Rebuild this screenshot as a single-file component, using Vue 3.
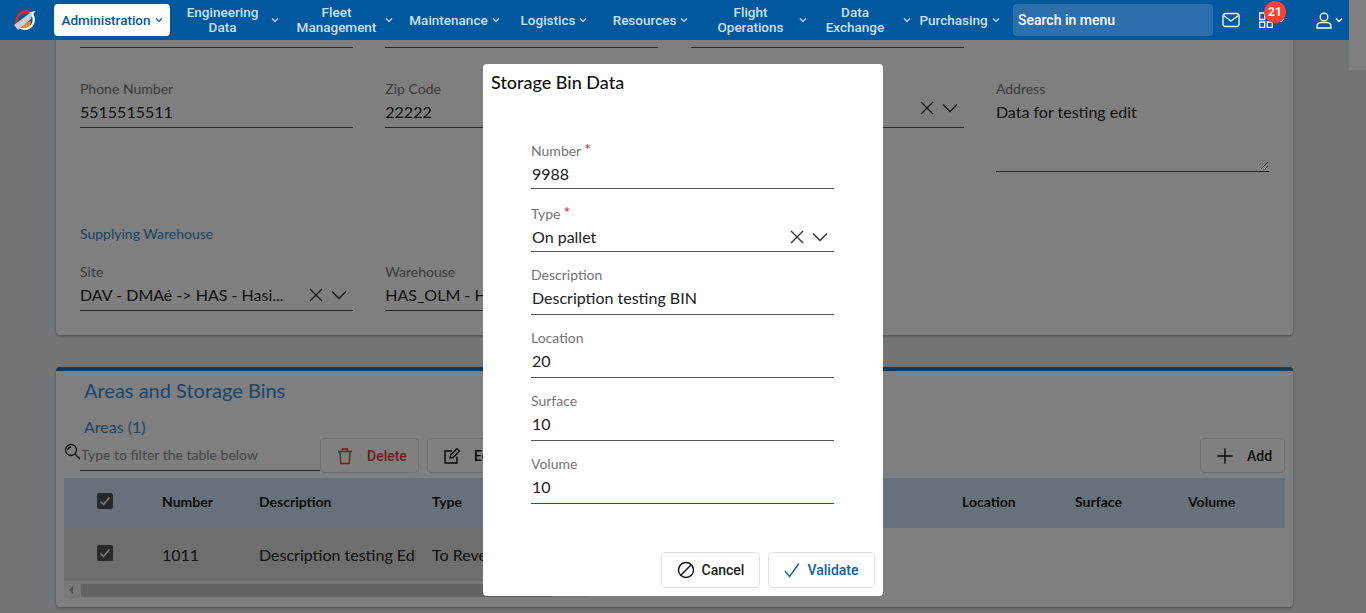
<template>
  <div class="app">
    <div class="page">
      <div class="content">
        <section class="card">
          <div class="form-grid">
            <div v-for="n in 3" :key="n" class="field">
              <span class="label">&nbsp;</span>
              <span class="value">&nbsp;</span>
            </div>
          </div>
          <div class="form-grid second-row">
            <div class="field">
              <span class="label">Phone Number</span>
              <span class="value">5515515511</span>
            </div>
            <div class="field">
              <span class="label">Zip Code</span>
              <span class="value">22222</span>
            </div>
            <div class="field">
              <span class="label">&nbsp;</span>
              <div class="value select-value">
                <span class="select-text"></span>
                <svg class="clear-icon" width="16" height="16" viewBox="0 0 16 16"><path d="M2 2l12 12M14 2L2 14" /></svg>
                <svg class="open-icon" width="16" height="16" viewBox="0 0 16 16"><path d="M1 4.5l7 7 7-7" /></svg>
              </div>
            </div>
            <div class="field textarea-field">
              <span class="label">Address</span>
              <span class="value">Data for testing edit</span>
              <svg class="resize-handle" width="8" height="9" viewBox="0 0 8 9"><path d="M0 8l7-7M4 8l3-3" /></svg>
            </div>
          </div>
          <h4 class="sub-title">Supplying Warehouse</h4>
          <div class="form-grid">
            <div class="field">
              <span class="label">Site</span>
              <div class="value select-value">
                <span class="select-text">DAV - DMAé -&gt; HAS - Hasi...</span>
                <svg class="clear-icon" width="16" height="16" viewBox="0 0 16 16"><path d="M2 2l12 12M14 2L2 14" /></svg>
                <svg class="open-icon" width="16" height="16" viewBox="0 0 16 16"><path d="M1 4.5l7 7 7-7" /></svg>
              </div>
            </div>
            <div class="field">
              <span class="label">Warehouse</span>
              <span class="value">HAS_OLM - Hasi</span>
            </div>
          </div>
        </section>

        <section class="card table-card">
          <h2 class="card-title">Areas and Storage Bins</h2>
          <h3 class="areas-title">Areas (1)</h3>
          <div class="toolbar">
            <div class="filter">
              <svg class="filter-icon" width="17" height="17" viewBox="0 0 17 17">
                <circle cx="7" cy="7" r="5.5" />
                <path d="M11 11l5 5M4 7a3 3 0 0 1 3-3" />
              </svg>
              <span class="filter-text">Type to filter the table below</span>
            </div>
            <button class="tool-btn delete-btn">
              <svg width="18" height="18" viewBox="0 0 18 18"><path d="M2 4.5h14M6.5 4.5V2h5v2.5M3.8 4.5l1 12h8.4l1-12" /></svg>
              Delete
            </button>
            <button class="tool-btn edit-btn">
              <svg width="18" height="18" viewBox="0 0 18 18"><path d="M14 9.5V16H2V4h7M7 11l.5-3L14 1.8l2.4 2.4L10 10.5z" /></svg>
              Edit
            </button>
            <button class="tool-btn add-btn">
              <svg width="18" height="18" viewBox="0 0 18 18"><path d="M9 1.5v15M1.5 9h15" /></svg>
              Add
            </button>
          </div>
          <div class="table-row table-head">
            <span class="check-cell"><i class="check"><svg width="12" height="12" viewBox="0 0 12 12"><path d="M1.5 6.5l3 3 6-7" /></svg></i></span>
            <span>Number</span>
            <span>Description</span>
            <span>Type</span>
            <span>Location</span>
            <span>Surface</span>
            <span>Volume</span>
          </div>
          <div class="table-body">
            <div class="table-row body-row">
              <span class="check-cell"><i class="check"><svg width="12" height="12" viewBox="0 0 12 12"><path d="M1.5 6.5l3 3 6-7" /></svg></i></span>
              <span>1011</span>
              <span class="clip">Description testing Edit</span>
              <span>To Reverse</span>
            </div>
            <div class="h-scroll">
              <i class="arrow"></i>
              <i class="thumb"></i>
            </div>
          </div>
        </section>
      </div>
      <div class="page-scroll"><i></i></div>
    </div>

    <div class="overlay"></div>

    <header class="topbar">
      <div class="logo">
        <svg width="28" height="26" viewBox="0 0 28 26">
          <path d="M5 17C2.5 10 8 3 15 3.2c2 0 3.500 .6 4.800 1.500l-2 2.300C13 5 7 8 7 14z" fill="#e5202e" />
          <path d="M11 21c5 1.500 9-2 9-7l-8 3z" fill="#f58220" />
          <path d="M8 21c4 3 10 2.500 13.500-1.500 3-3.500 3-9 .8-12.500l2.200-3-6 1.200 1 5.500 1.300-1.700c1.500 3 1 6.500-1 9-2.500 3-7 3.800-10.300 2.500z" fill="#fff" />
          <path d="M3 18L21 4.500 20 12 7 23z" fill="#c9ced3" />
        </svg>
      </div>
      <nav class="menu">
        <a v-for="item in menu" :key="item.label" class="menu-item" :class="{ active: item.active }">
          <span>{{ item.label }}</span>
          <svg width="8" height="6" viewBox="0 0 8 6"><path d="M1 1.500l3 3 3-3" /></svg>
        </a>
      </nav>
      <div class="menu-search">Search in menu</div>
      <div class="actions">
        <svg class="mail" width="18" height="16" viewBox="0 0 18 16">
          <rect x="1" y="1.500" width="16" height="13" rx="2.500" />
          <path d="M1.500 3.500L9 9l7.500-5.500" />
        </svg>
        <div class="apps">
          <svg width="15" height="16" viewBox="0 0 15 16">
            <path d="M.7 1h5v6.500h-5zM.7 10h5v5.300h-5zM8.300 10h5v5.300h-5z" />
          </svg>
          <span class="badge">21</span>
          <svg class="small-chevron" width="8" height="6" viewBox="0 0 8 6"><path d="M1 1.500l3 3 3-3" /></svg>
        </div>
        <div class="user">
          <svg width="16" height="17" viewBox="0 0 16 17">
            <circle cx="8" cy="5" r="3.800" />
            <path d="M1 16v-1.500C1 12 3 10.500 5.500 10.500h5c2.500 0 4.500 1.500 4.500 4V16z" />
          </svg>
          <svg class="small-chevron" width="8" height="6" viewBox="0 0 8 6"><path d="M1 1.500l3 3 3-3" /></svg>
        </div>
      </div>
    </header>

    <div class="modal">
      <h3 class="modal-title">Storage Bin Data</h3>
      <div class="modal-form">
        <div v-for="f in fields" :key="f.label" class="field modal-field" :class="{ focused: f.focused }">
          <span class="label">{{ f.label }}<b v-if="f.required" class="required">*</b></span>
          <div v-if="f.select" class="value select-value">
            <span class="select-text">{{ f.value }}</span>
            <svg class="clear-icon" width="16" height="16" viewBox="0 0 16 16"><path d="M2 2l12 12M14 2L2 14" /></svg>
            <svg class="open-icon" width="16" height="16" viewBox="0 0 16 16"><path d="M1 4.500l7 7 7-7" /></svg>
          </div>
          <span v-else class="value">{{ f.value }}</span>
        </div>
      </div>
      <div class="modal-actions">
        <button class="modal-btn">
          <svg width="18" height="18" viewBox="0 0 18 18"><circle cx="9" cy="9" r="7.500" /><path d="M3.800 14.200L14.200 3.800" /></svg>
          Cancel
        </button>
        <button class="modal-btn validate">
          <svg width="16" height="16" viewBox="0 0 16 16"><path d="M1 9l4.500 5.500L15 1.500" /></svg>
          Validate
        </button>
      </div>
    </div>
  </div>
</template>

<script setup>
  const menu = [
    { label: "Administration", active: true },
    { label: "Engineering Data" },
    { label: "Fleet Management" },
    { label: "Maintenance" },
    { label: "Logistics" },
    { label: "Resources" },
    { label: "Flight Operations" },
    { label: "Data Exchange" },
    { label: "Purchasing" },
  ];

  const fields = [
    { label: "Number", value: "9988", required: true },
    { label: "Type", value: "On pallet", required: true, select: true },
    { label: "Description", value: "Description testing BIN" },
    { label: "Location", value: "20" },
    { label: "Surface", value: "10" },
    { label: "Volume", value: "10", focused: true },
  ];
</script>

<style>
  html,
  body {
    margin: 0;
    overflow: hidden;
  }
</style>

<style scoped>
  .app {
    position: relative;
    width: 1366px;
    height: 613px;
    overflow: hidden;
    font-family: "Lato", "Liberation Sans", sans-serif;
    background: #e6e8ec;
  }

  .page {
    display: flex;
    height: 613px;
  }

  .content {
    width: 1349px;
    padding: 0 56px 0;
    box-sizing: border-box;
  }

  .page-scroll i {
    display: block;
    width: 17px;
    height: 70px;
    background: #fefefe;
  }

  .card {
    height: 335px;
    padding: 0 24px;
    box-sizing: border-box;
    width: 1237px;
    background: #fff;
    border-radius: 4px;
    box-shadow: 0 1px 3px rgba(0, 0, 0, 0.35);
  }

  .form-grid {
    display: grid;
    grid-template-columns: repeat(4, 273px);
    column-gap: 32.3px;
  }

  .second-row {
    margin-top: 32px;
    height: 92px;
  }

  .field {
    display: flex;
    flex-direction: column;
    border-bottom: 1px solid #555;
    height: 48px;
    box-sizing: border-box;
  }

  .label {
    font-size: 14px;
    line-height: 17px;
    color: #757575;
    white-space: nowrap;
  }

  .value {
    margin-top: 3px;
    font-size: 16px;
    line-height: 24px;
    color: #212121;
    white-space: nowrap;
    overflow: hidden;
  }

  .select-value {
    display: flex;
    align-items: center;
    overflow: visible;
  }

  .select-text {
    flex: 1;
  }

  .clear-icon,
  .open-icon {
    fill: none;
    stroke: #333;
    stroke-width: 1.4;
    flex-shrink: 0;
  }

  .open-icon {
    margin-left: 7px;
    margin-right: 6px;
  }

  .textarea-field {
    position: relative;
    height: 92px;
  }

  .resize-handle {
    position: absolute;
    right: 0;
    bottom: 1px;
    fill: none;
    stroke: #333;
  }

  .sub-title {
    margin: 53px 0 21px;
    font-size: 14px;
    line-height: 17px;
    font-weight: 400;
    color: #3a86c0;
  }

  .table-card {
    margin-top: 32px;
    height: 240px;
    padding: 0 8px;
    border-top: 4px solid #0077d0;
    position: relative;
  }

  .card-title {
    margin: 5px 0 0 20px;
    font-size: 20px;
    line-height: 28px;
    font-weight: 400;
    color: #3a8bcb;
  }

  .areas-title {
    margin: 13px 0 0 20px;
    font-size: 16px;
    line-height: 20px;
    font-weight: 400;
    color: #3a8bcb;
  }

  .toolbar {
    display: flex;
    align-items: flex-start;
    height: 40px;
    margin-top: 1px;
  }

  .filter {
    position: relative;
    width: 240px;
    height: 32px;
    margin-left: 16px;
    border-bottom: 1px solid #555;
    box-sizing: content-box;
  }

  .filter-icon {
    position: absolute;
    left: -16px;
    top: 5px;
    fill: none;
    stroke: #111;
    stroke-width: 1.300;
  }

  .filter-text {
    position: absolute;
    left: 1px;
    top: 8px;
    font-size: 14px;
    line-height: 17px;
    color: #8a8a8a;
    white-space: nowrap;
  }

  .tool-btn {
    display: flex;
    align-items: center;
    gap: 13px;
    height: 35px;
    padding: 0 15px;
    box-sizing: border-box;
    background: transparent;
    border: 1px solid #e0e0e0;
    border-radius: 4px;
    font-family: "Roboto", sans-serif;
    font-size: 14px;
    font-weight: 500;
    color: #111;
  }

  .tool-btn svg {
    fill: none;
    stroke: #111;
    stroke-width: 1.400;
    flex-shrink: 0;
  }

  .delete-btn {
    width: 99px;
    color: #e03a3a;
  }

  .delete-btn svg {
    stroke: #e03a3a;
  }

  .edit-btn {
    width: 90px;
    margin-left: 8px;
  }

  .add-btn {
    width: 85px;
    margin-left: auto;
  }

  .table-row {
    display: grid;
    grid-template-columns: 98px 97px 173px 530px 113px 113px 97px;
    font-size: 14px;
  }

  .table-head {
    height: 50px;
    padding-top: 15px;
    box-sizing: border-box;
    background: #cfe2f6;
    font-weight: 700;
    line-height: 17px;
    color: #111;
  }

  .check-cell {
    padding-left: 33px;
  }

  .check {
    display: flex;
    align-items: center;
    justify-content: center;
    width: 16px;
    height: 16px;
    border-radius: 2px;
    background: #4c5058;
  }

  .check svg {
    fill: none;
    stroke: #fff;
    stroke-width: 1.500;
  }

  .table-body {
    width: 526px;
  }

  .body-row {
    height: 53px;
    padding-top: 17px;
    box-sizing: border-box;
    background: #dcdcdc;
    font-size: 16px;
    line-height: 20px;
    color: #222;
  }

  .clip {
    overflow: hidden;
    white-space: nowrap;
    width: 157px;
  }

  .h-scroll {
    position: relative;
    height: 17px;
    background: #f1f1f1;
  }

  .thumb {
    position: absolute;
    left: 17px;
    top: 3px;
    width: 471px;
    height: 13px;
    background: #c4c4c4;
  }

  .arrow {
    position: absolute;
    left: 5px;
    top: 5px;
    border-style: solid;
    border-width: 4px 4px 4px 0;
    border-color: transparent #a0a0a0 transparent transparent;
  }

  .overlay {
    position: absolute;
    inset: 0;
    z-index: 10;
    background: rgba(0, 0, 0, 0.5);
  }

  .topbar {
    position: absolute;
    top: 0;
    left: 0;
    z-index: 20;
    display: flex;
    align-items: center;
    width: 1349px;
    height: 40px;
    background: #00589f;
    font-family: "Roboto", sans-serif;
  }

  .logo {
    width: 54px;
    padding-left: 11px;
    box-sizing: border-box;
    display: flex;
    align-items: center;
  }

  .menu {
    display: grid;
    grid-template-columns: 116px 117px 111px 113px 86px 107px 105px 104px 93px;
    height: 32px;
  }

  .menu-item {
    display: flex;
    align-items: center;
    justify-content: center;
    gap: 4px;
    text-align: center;
    font-size: 13.500px;
    line-height: 15px;
    font-weight: 500;
    color: #cfe0f2;
    border-radius: 4px;
  }

  .menu-item svg {
    fill: none;
    stroke: currentColor;
    stroke-width: 1.200;
    flex-shrink: 0;
  }

  .menu-item span {
    max-width: 88px;
  }

  .menu-item.active {
    background: #fff;
    color: #00589f;
  }

  .menu-item.active span {
    max-width: none;
  }

  .menu-search {
    width: 200px;
    height: 32px;
    margin-left: 7px;
    padding-left: 5px;
    box-sizing: border-box;
    border-radius: 4px;
    background: #2b6fad;
    color: #fff;
    font-size: 14px;
    font-weight: 500;
    line-height: 32px;
  }

  .actions {
    display: flex;
    align-items: center;
    margin-left: 9px;
    color: #fff;
  }

  .actions svg {
    fill: none;
    stroke: #fff;
    stroke-width: 1.300;
  }

  .apps {
    position: relative;
    display: flex;
    align-items: center;
    gap: 3px;
    margin-left: 19px;
  }

  .badge {
    position: absolute;
    left: 5px;
    top: -11px;
    width: 22px;
    height: 22px;
    border-radius: 50%;
    background: #f44336;
    color: #fff;
    font-size: 12px;
    font-weight: 700;
    line-height: 22px;
    text-align: center;
  }

  .user {
    display: flex;
    align-items: center;
    gap: 3px;
    margin-left: 31px;
  }

  .modal {
    position: absolute;
    top: 64px;
    left: 483px;
    z-index: 30;
    display: flex;
    flex-direction: column;
    width: 400px;
    height: 532px;
    box-sizing: border-box;
    background: #fff;
    border-radius: 4px;
  }

  .modal-title {
    margin: 7px 0 0 8px;
    font-size: 18px;
    line-height: 22px;
    font-weight: 500;
    color: #111;
  }

  .modal-form {
    display: flex;
    flex-direction: column;
    gap: 14px;
    margin: 47px 49px 0 48px;
  }

  .modal-field {
    height: 49px;
  }

  .modal-field .value {
    padding-left: 1px;
  }

  .focused {
    border-bottom-color: #00589f;
  }

  .required {
    margin-left: 3px;
    color: #c62828;
    font-size: 16px;
    font-weight: 400;
    vertical-align: 1px;
  }

  .modal-actions {
    display: flex;
    justify-content: flex-end;
    gap: 8px;
    margin: auto 8px 8px 0;
  }

  .modal-btn {
    display: flex;
    align-items: center;
    justify-content: center;
    gap: 7px;
    width: 99px;
    height: 36px;
    background: #fff;
    border: 1px solid #e0e0e0;
    border-radius: 4px;
    font-family: "Roboto", sans-serif;
    font-size: 14px;
    font-weight: 500;
    color: #212121;
  }

  .modal-btn svg {
    fill: none;
    stroke: #111;
    stroke-width: 1.400;
  }

  .validate {
    width: 107px;
    color: #0f62a8;
  }

  .validate svg {
    stroke: #0f62a8;
  }
</style>
